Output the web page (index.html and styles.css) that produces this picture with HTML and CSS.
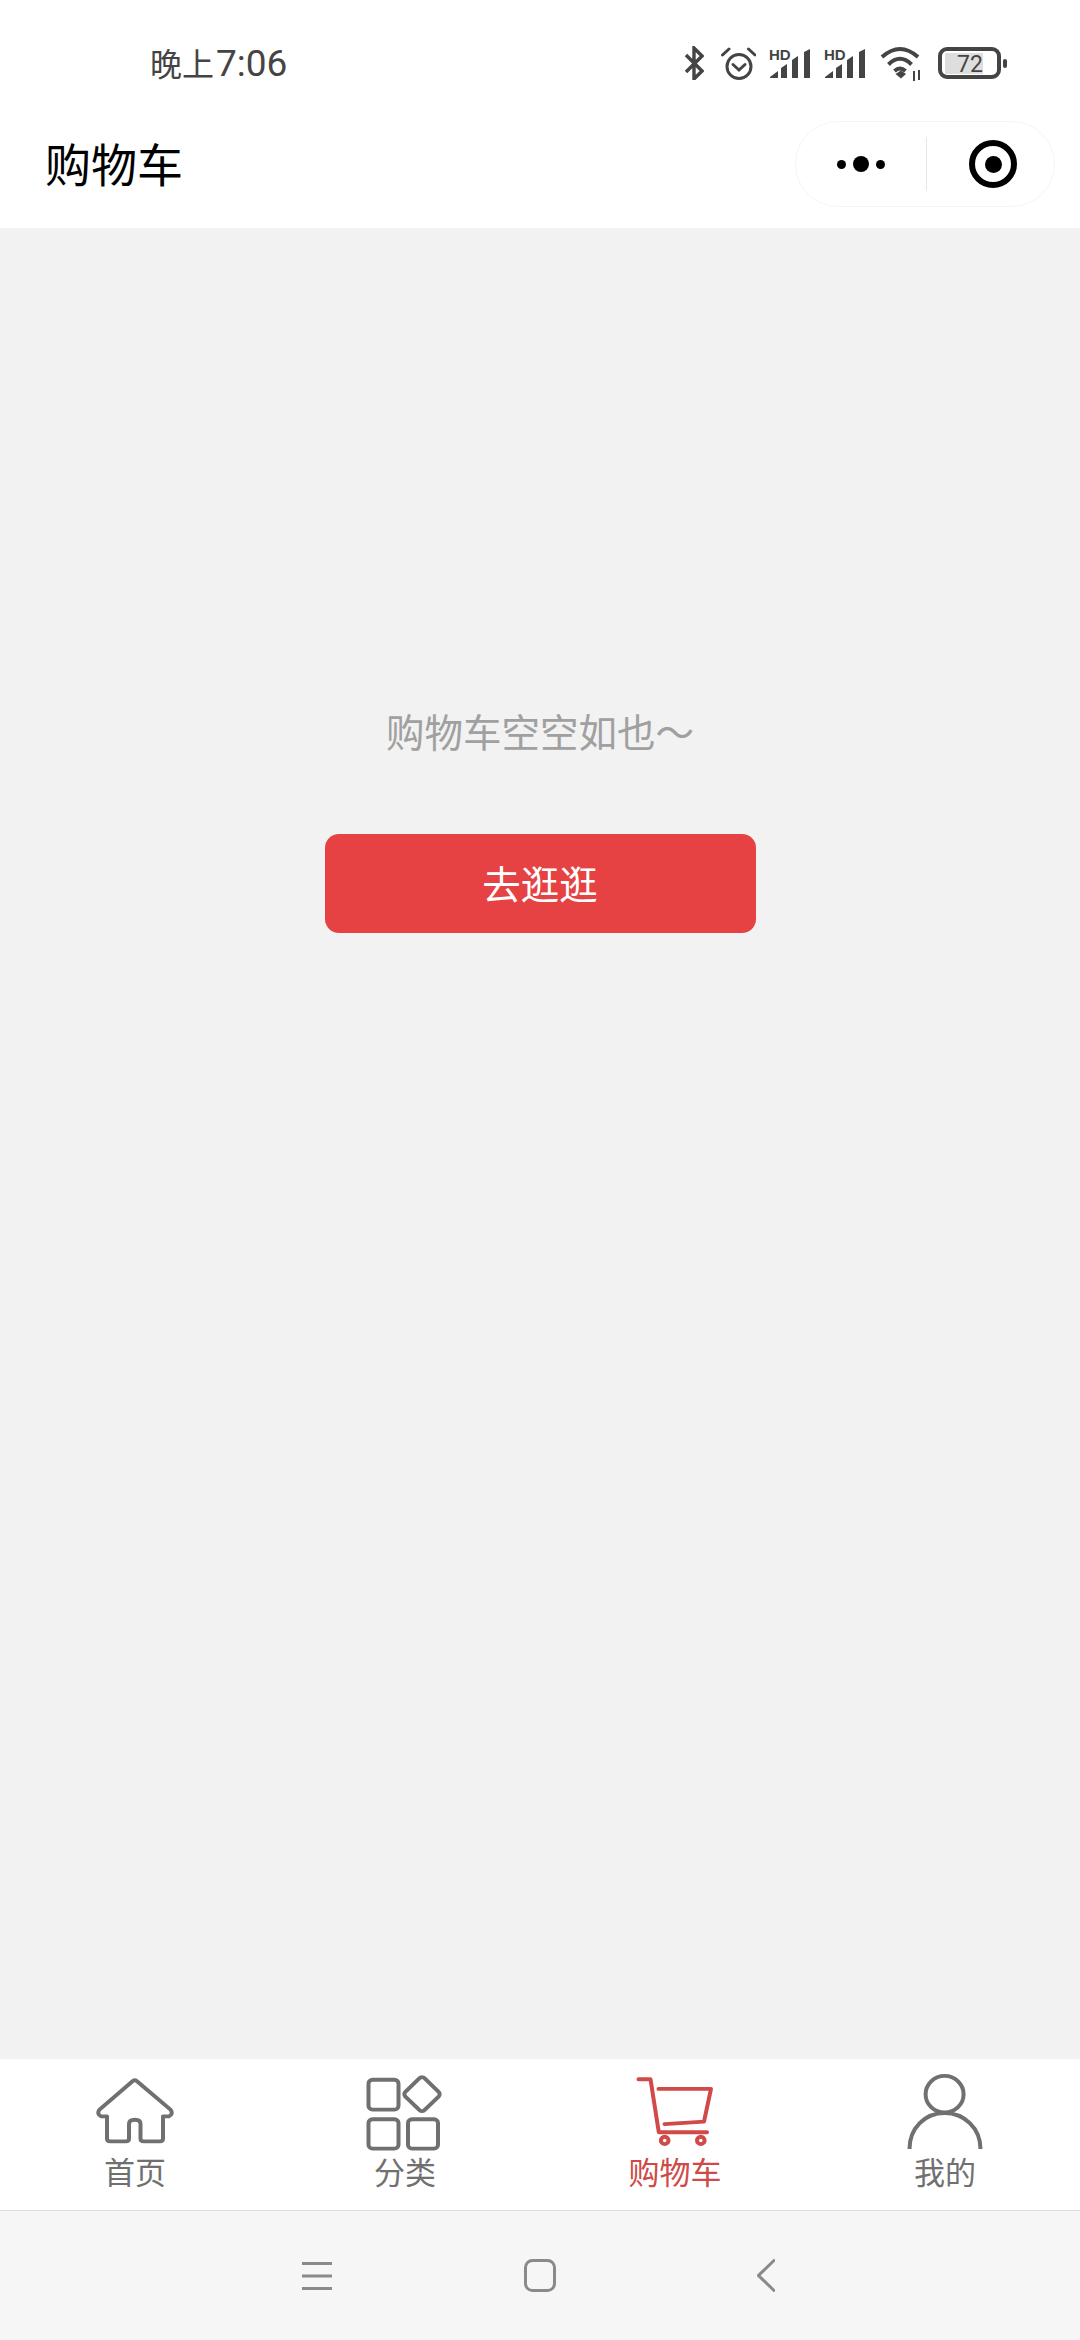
FILE: index.html
```html
<!DOCTYPE html>
<html lang="zh-CN">
<head>
    <meta charset="UTF-8">
    <meta name="viewport" content="width=device-width, initial-scale=1.0">
    <title>购物车</title>
    <link rel="stylesheet" href="styles.css">
</head>
<body>
    <div class="page">
        <!-- Status bar -->
        <div class="status-bar">
            <div class="status-time">晚上<span class="status-digits">7:06</span></div>
            <div class="status-icons">
                <svg width="20" height="34" viewBox="0 0 20 34" fill="none" stroke="#444" stroke-width="3.4">
                    <path d="M2 9 L18 25 L10 33 V2 L18 10 L2 26"/>
                </svg>
                <svg class="icon-alarm" width="36" height="34" viewBox="0 0 36 34" fill="none" stroke="#444" stroke-width="3">
                    <circle cx="19" cy="20.5" r="12"/>
                    <path d="M13 18.5 L19 24 L25 18.5" stroke-linecap="round"/>
                    <path d="M2.5 9 L9 3 M35 9 L28.5 3" stroke-linecap="round"/>
                </svg>
                <svg class="icon-signal" width="42" height="32" viewBox="0 0 42 32" fill="#444">
                    <text class="hd-label" x="0" y="13">HD</text>
                    <polygon points="1,30 9,24 9,31 1,31"/>
                    <polygon points="12,21 18,17 18,31 12,31"/>
                    <polygon points="23,13 29,9 29,31 23,31"/>
                    <polygon points="35,5 41,2 41,31 35,31"/>
                </svg>
                <svg class="icon-signal" width="42" height="32" viewBox="0 0 42 32" fill="#444">
                    <text class="hd-label" x="0" y="13">HD</text>
                    <polygon points="1,30 9,24 9,31 1,31"/>
                    <polygon points="12,21 18,17 18,31 12,31"/>
                    <polygon points="23,13 29,9 29,31 23,31"/>
                    <polygon points="35,5 41,2 41,31 35,31"/>
                </svg>
                <svg class="icon-wifi" width="42" height="36" viewBox="0 0 42 36" fill="none" stroke="#444" stroke-width="4">
                    <path d="M2 12 Q20 -4 38 12"/>
                    <path d="M8.5 19.5 Q20 8 31.5 19.5"/>
                    <path d="M14.5 26 Q20 21 25.5 26"/>
                    <path d="M15.5 29 L21 25.5 L26 29 L21 33.5Z" fill="#444" stroke="none"/>
                    <path d="M34 26 V36 M39 25 V35" stroke-width="2"/>
                </svg>
                <svg class="icon-battery" width="70" height="34" viewBox="0 0 70 34">
                    <rect x="7" y="7" width="38" height="21" fill="#dedede"/>
                    <rect x="2" y="3" width="59" height="28" rx="7" fill="none" stroke="#444" stroke-width="4"/>
                    <rect x="65" y="13" width="4" height="9" rx="2" fill="#444"/>
                    <text class="battery-label" x="32" y="26">72</text>
                </svg>
            </div>
        </div>

        <!-- Title bar -->
        <div class="title-bar">
            <div class="title-text">购物车</div>
            <div class="capsule">
                <div class="capsule-dots">
                    <span class="dot"></span>
                    <span class="dot dot-big"></span>
                    <span class="dot"></span>
                </div>
                <div class="capsule-line"></div>
                <div class="capsule-target">
                    <span class="target-core"></span>
                </div>
            </div>
        </div>

        <!-- Empty cart -->
        <div class="cart-empty">
            <div class="empty-text">购物车空空如也～</div>
            <button class="go-button">去逛逛</button>
        </div>

        <!-- Tab bar -->
        <div class="tab-bar">
            <div class="tab-item">
                <svg class="tab-icon" viewBox="0 0 78 80" preserveAspectRatio="none" fill="none" stroke="#707070" stroke-width="4" stroke-linejoin="round">
                    <path d="M36.5 7.5 L3.5 37 Q0.5 42 5 44 H11 V67 Q11 70 14 70 H30 Q33 70 33 67 V52 Q33 47.5 39 47.5 Q44.5 47.5 44.5 52 V67 Q44.5 70 47.5 70 H64 Q67 70 67 67 V44 H73 Q77.5 42 74.5 37 L41 7.5 Q38.5 5.5 36.5 7.5Z"/>
                </svg>
                <div class="tab-label">首页</div>
            </div>
            <div class="tab-item">
                <svg class="tab-icon" viewBox="0 0 78 80" preserveAspectRatio="none" fill="none" stroke="#707070" stroke-width="4">
                    <rect x="2.5" y="6" width="30" height="31" rx="4"/>
                    <rect x="2.5" y="47" width="30" height="30.5" rx="4"/>
                    <rect x="42" y="47" width="30" height="30.5" rx="4"/>
                    <rect x="42.5" y="7.5" width="27" height="27" rx="3.5" transform="rotate(45 56 21)"/>
                </svg>
                <div class="tab-label">分类</div>
            </div>
            <div class="tab-item tab-active">
                <svg class="tab-icon" viewBox="0 0 78 80" preserveAspectRatio="none" fill="none" stroke="#cf4a48" stroke-width="4" stroke-linecap="round" stroke-linejoin="round">
                    <path d="M2.5 5.5 H14.5 L22.8 60.5 H71"/>
                    <path d="M22.5 15.5 H75 L68 49.5 L28.5 52"/>
                    <circle cx="28.7" cy="69" r="3.8"/>
                    <circle cx="64.8" cy="69" r="3.8"/>
                </svg>
                <div class="tab-label">购物车</div>
            </div>
            <div class="tab-item">
                <svg class="tab-icon" viewBox="0 0 78 80" preserveAspectRatio="none" fill="none" stroke="#707070" stroke-width="4">
                    <circle cx="38.6" cy="21" r="19"/>
                    <path d="M3.5 78 C3.5 56 19 40.5 38.6 40.5 C58 40.5 74.5 56 74.5 78"/>
                </svg>
                <div class="tab-label">我的</div>
            </div>
        </div>

        <!-- Navigation bar -->
        <div class="nav-bar">
            <svg width="30" height="28" viewBox="0 0 30 28" stroke="#8a8a8a" stroke-width="3">
                <path d="M0 1.5 H30 M0 14 H30 M0 26.5 H30"/>
            </svg>
            <svg class="nav-home" width="32" height="33" viewBox="0 0 32 33" fill="none" stroke="#8a8a8a" stroke-width="3">
                <rect x="1.5" y="1.5" width="29" height="30" rx="7"/>
            </svg>
            <svg width="18" height="33" viewBox="0 0 18 33" fill="none" stroke="#8a8a8a" stroke-width="3" stroke-linecap="round">
                <path d="M17 1.5 L1.5 16.5 L17 31.5"/>
            </svg>
        </div>
    </div>
</body>
</html>
```

FILE: styles.css
```css
/* Page */
body {
    margin: 0;
    background-color: #f2f2f2;
    font-family: "Noto Sans CJK SC", "Noto Sans", sans-serif;
}

.page {
    display: flex;
    flex-direction: column;
    width: 1080px;
    height: 2340px;
    overflow: hidden;
}

/* Status bar */
.status-bar {
    display: flex;
    justify-content: space-between;
    align-items: center;
    box-sizing: border-box;
    height: 100px;
    padding: 30px 72px 0 150px;
    background-color: #fff;
}

.status-time {
    padding-bottom: 4px;
    font-size: 32px;
    line-height: 60px;
    color: #444;
}

.status-digits {
    margin-left: 2px;
    font-family: Roboto, sans-serif;
    font-size: 37px;
    font-weight: 400;
}

.status-icons {
    display: flex;
    align-items: center;
    height: 40px;
    margin-bottom: 4px;
}

.icon-alarm {
    margin-left: 16px;
}

.icon-signal {
    margin-left: 13px;
}

.icon-wifi {
    margin-left: 14px;
}

.icon-battery {
    margin-left: 16px;
}

.hd-label {
    font-family: "Liberation Sans", sans-serif;
    font-size: 15px;
    font-weight: bold;
}

.battery-label {
    font-family: Roboto, sans-serif;
    font-size: 23px;
    text-anchor: middle;
    fill: #444;
}

/* Title bar */
.title-bar {
    display: flex;
    justify-content: space-between;
    align-items: center;
    box-sizing: border-box;
    height: 128px;
    padding: 0 25px 0 45px;
    background-color: #fff;
}

.title-text {
    padding-bottom: 4px;
    font-size: 46px;
    color: #000;
}

.capsule {
    display: flex;
    align-items: center;
    box-sizing: border-box;
    width: 260px;
    height: 86px;
    border: 1px solid #f5f5f5;
    border-radius: 43px;
}

.capsule-dots {
    display: flex;
    justify-content: center;
    align-items: center;
    gap: 7px;
    width: 130px;
}

.dot {
    width: 9px;
    height: 9px;
    background-color: #000;
    border-radius: 50%;
}

.dot-big {
    width: 16px;
    height: 16px;
}

.capsule-line {
    width: 1px;
    height: 54px;
    background-color: #e8e8e8;
}

.capsule-target {
    display: flex;
    justify-content: center;
    align-items: center;
    box-sizing: border-box;
    width: 48px;
    height: 48px;
    margin-left: 42px;
    border: 6px solid #000;
    border-radius: 50%;
}

.target-core {
    width: 17px;
    height: 17px;
    background-color: #000;
    border-radius: 50%;
}

/* Empty cart */
.cart-empty {
    display: flex;
    flex: 1;
    flex-direction: column;
    align-items: center;
    padding-top: 477px;
}

.empty-text {
    font-size: 38.5px;
    line-height: 50px;
    color: #a0a0a0;
}

.go-button {
    width: 431px;
    height: 99px;
    margin-top: 79px;
    padding: 0 0 3px;
    background-color: #e64243;
    color: #fff;
    border: none;
    border-radius: 14px;
    font-family: inherit;
    font-size: 38.5px;
}

/* Tab bar */
.tab-bar {
    display: grid;
    grid-template-columns: repeat(4, 1fr);
    box-sizing: border-box;
    height: 152px;
    padding-top: 15px;
    background-color: #fff;
    border-bottom: 1px solid #dedede;
}

.tab-item {
    display: flex;
    flex-direction: column;
    align-items: center;
    color: #707070;
}

.tab-icon {
    display: block;
    width: 78px;
    height: 77px;
}

.tab-label {
    margin-top: 1px;
    font-size: 31px;
    line-height: 38px;
}

.tab-active .tab-label {
    color: #cf4a48;
}

/* Navigation bar */
.nav-bar {
    display: flex;
    align-items: center;
    box-sizing: border-box;
    height: 129px;
    padding-left: 302px;
    background-color: #f6f6f6;
}

.nav-home {
    margin: 0 201px 0 192px;
}
```
